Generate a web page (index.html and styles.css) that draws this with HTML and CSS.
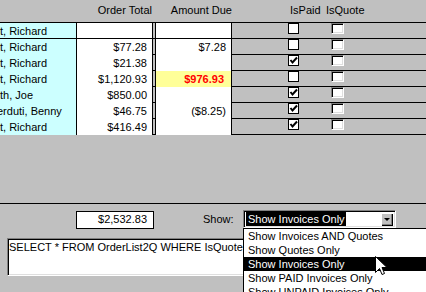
FILE: index.html
```html
<!DOCTYPE html>
<html lang="en">
<head>
    <meta charset="UTF-8">
    <title>Order List</title>
    <link rel="stylesheet" href="styles.css">
</head>
<body>
    <div class="screen">
        <div class="grid">
            <div class="grid-head">
                <div></div>
                <div class="h-order">Order Total</div>
                <div></div>
                <div class="h-amount">Amount Due</div>
                <div class="h-paid">IsPaid</div>
                <div class="h-quote">IsQuote</div>
            </div>
            <div class="grid-row">
                <div class="c-name">t, Richard</div>
                <div class="c-order"></div>
                <div class="c-gap"></div>
                <div class="c-amount"></div>
                <div class="c-paid"><span class="chk"></span></div>
                <div class="c-quote"><span class="chk-3d"></span></div>
            </div>
            <div class="grid-row">
                <div class="c-name">t, Richard</div>
                <div class="c-order">$77.28</div>
                <div class="c-gap"></div>
                <div class="c-amount">$7.28</div>
                <div class="c-paid"><span class="chk"></span></div>
                <div class="c-quote"><span class="chk-3d"></span></div>
            </div>
            <div class="grid-row">
                <div class="c-name">t, Richard</div>
                <div class="c-order">$21.38</div>
                <div class="c-gap"></div>
                <div class="c-amount"></div>
                <div class="c-paid"><span class="chk"><svg width="9" height="9" viewBox="0 0 9 9"><polyline points="1.5,4 3.5,6.5 8,1.5" fill="none" stroke="#000" stroke-width="2"/></svg></span></div>
                <div class="c-quote"><span class="chk-3d"></span></div>
            </div>
            <div class="grid-row">
                <div class="c-name">t, Richard</div>
                <div class="c-order">$1,120.93</div>
                <div class="c-gap"></div>
                <div class="c-amount due">$976.93</div>
                <div class="c-paid"><span class="chk"></span></div>
                <div class="c-quote"><span class="chk-3d"></span></div>
            </div>
            <div class="grid-row">
                <div class="c-name">th, Joe</div>
                <div class="c-order">$850.00</div>
                <div class="c-gap"></div>
                <div class="c-amount"></div>
                <div class="c-paid"><span class="chk"><svg width="9" height="9" viewBox="0 0 9 9"><polyline points="1.5,4 3.5,6.5 8,1.5" fill="none" stroke="#000" stroke-width="2"/></svg></span></div>
                <div class="c-quote"><span class="chk-3d"></span></div>
            </div>
            <div class="grid-row">
                <div class="c-name cut">erduti, Benny</div>
                <div class="c-order">$46.75</div>
                <div class="c-gap"></div>
                <div class="c-amount">($8.25)</div>
                <div class="c-paid"><span class="chk"><svg width="9" height="9" viewBox="0 0 9 9"><polyline points="1.5,4 3.5,6.5 8,1.5" fill="none" stroke="#000" stroke-width="2"/></svg></span></div>
                <div class="c-quote"><span class="chk-3d"></span></div>
            </div>
            <div class="grid-row">
                <div class="c-name">t, Richard</div>
                <div class="c-order">$416.49</div>
                <div class="c-gap"></div>
                <div class="c-amount"></div>
                <div class="c-paid"><span class="chk"><svg width="9" height="9" viewBox="0 0 9 9"><polyline points="1.5,4 3.5,6.5 8,1.5" fill="none" stroke="#000" stroke-width="2"/></svg></span></div>
                <div class="c-quote"><span class="chk-3d"></span></div>
            </div>
        </div>
        <div class="grid-rest"></div>
        <div class="footer">
            <div class="footer-row">
                <div class="total">$2,532.83</div>
                <div class="show-label">Show:</div>
                <div class="combo">
                    <span class="combo-sel">Show Invoices Only</span>
                    <span class="combo-btn"><span class="arrow"></span></span>
                </div>
            </div>
            <div class="sql">SELECT * FROM OrderList2Q WHERE IsQuote=False</div>
        </div>
        <ul class="dropdown">
            <li>Show Invoices AND Quotes</li>
            <li>Show Quotes Only</li>
            <li class="hot">Show Invoices Only</li>
            <li>Show PAID Invoices Only</li>
            <li>Show UNPAID Invoices Only</li>
        </ul>
        <!-- mouse pointer over the list -->
        <svg class="pointer" width="13" height="21" viewBox="0 0 13 21">
            <path d="M0.5 0.5 L0.5 16.5 L4.5 12.5 L7 18.5 L9.5 17.5 L7 11.5 L12 11.5 Z" fill="#fff" stroke="#000" stroke-width="1"/>
        </svg>
    </div>
</body>
</html>
```

FILE: styles.css
```css
body {
    margin: 0;
    background: #c0c0c0;
    font-family: "Liberation Sans", Arial, sans-serif;
    font-size: 11px;
    color: #000;
    overflow: hidden;
}
.screen {
    position: relative;
    width: 426px;
    height: 292px;
    overflow: hidden;
}
.grid-head, .grid-row {
    display: grid;
    grid-template-columns: 77px 76px 3px 76px 94px 1fr;
    border-bottom: 1px solid #000;
    white-space: nowrap;
}
.grid-head {
    height: 22px;
    line-height: 20px;
}
.h-order {
    text-align: right;
    padding-right: 1px;
}
.h-amount {
    text-align: right;
}
.h-paid {
    padding-left: 58px;
}
.grid-row {
    height: 15px;
    line-height: 16px;
}
.c-name {
    background: #ccffff;
    border-right: 1px solid #000;
    overflow: hidden;
}
.c-name.cut {
    text-indent: -3px;
}
.c-order, .c-amount {
    background: #fff;
    border-right: 1px solid #000;
    text-align: right;
    padding-right: 5px;
}
.c-gap {
    border-right: 1px solid #000;
}
.c-amount.due {
    background: #ffff99;
    color: #ff0000;
    font-weight: bold;
    padding-right: 7px;
}
.c-paid {
    padding-left: 56px;
}
.c-quote {
    padding-left: 5px;
}
.chk {
    display: block;
    width: 9px;
    height: 9px;
    border: 1px solid #000;
    background: #fff;
}
.chk svg {
    display: block;
}
.chk-3d {
    display: block;
    width: 11px;
    height: 9px;
    border: 1px solid;
    border-color: #808080 #fff #fff #808080;
    box-shadow: inset 1px 1px #000, inset -1px -1px #dfdfdf;
    background: #fff;
}
.grid-rest {
    height: 68px;
}
.footer {
    border-top: 1px solid #000;
    padding-top: 6px;
}
.footer-row {
    display: flex;
    align-items: flex-start;
    padding-left: 76px;
    height: 18px;
}
.total {
    margin-top: 1px;
    width: 70px;
    height: 16px;
    line-height: 14px;
    border: 1px solid #000;
    background: #fff;
    text-align: right;
    padding-right: 6px;
}
.show-label {
    width: 40px;
    margin-left: 49px;
    margin-top: 2px;
    line-height: 14px;
}
.combo {
    display: flex;
    align-items: center;
    justify-content: space-between;
    box-sizing: border-box;
    width: 153px;
    height: 18px;
    padding: 2px 2px 2px 2px;
    border: 1px solid;
    border-color: #808080 #fff #fff #808080;
    box-shadow: inset 1px 1px #000, inset -1px -1px #dfdfdf;
    background: #fff;
}
.combo-sel {
    background: #000;
    color: #fff;
    line-height: 14px;
    padding: 0 1px 0 2px;
}
.combo-btn {
    display: flex;
    align-items: center;
    justify-content: center;
    width: 12px;
    height: 13px;
    background: #c0c0c0;
    box-shadow: inset 1px 1px #fff, inset -1px -1px #000, inset -2px -2px #808080;
}
.arrow {
    width: 0;
    height: 0;
    border-left: 3px solid transparent;
    border-right: 3px solid transparent;
    border-top: 3px solid #000;
}
.sql {
    margin: 10px 0 0 7px;
    width: 420px;
    height: 34px;
    padding: 2px 0 0 1px;
    line-height: 12px;
    border: 1px solid;
    border-color: #808080 #fff #fff #808080;
    box-shadow: inset 1px 1px #000, inset -1px -1px #dfdfdf;
    background: #fff;
    white-space: nowrap;
    overflow: hidden;
}
.dropdown {
    position: absolute;
    left: 243px;
    top: 228px;
    width: 200px;
    height: 80px;
    margin: 0;
    padding: 0;
    list-style: none;
    border: 1px solid #000;
    background: #fff;
}
.dropdown li {
    height: 14px;
    line-height: 14px;
    padding-left: 4px;
    white-space: nowrap;
}
.dropdown li.hot {
    background: #000;
    color: #fff;
}
.pointer {
    position: absolute;
    left: 375px;
    top: 256px;
}
```
